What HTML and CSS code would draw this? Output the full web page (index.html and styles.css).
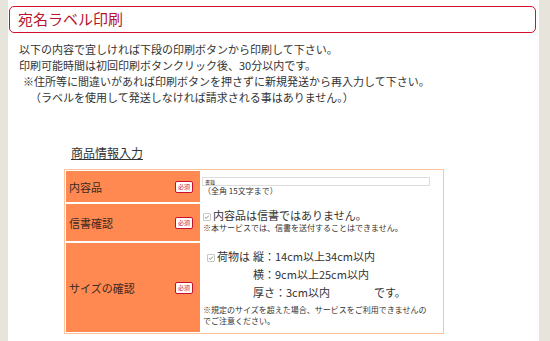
FILE: index.html
```html
<!DOCTYPE html>
<html lang="ja">
<head>
<meta charset="utf-8">
<title>宛名ラベル印刷</title>
<link rel="stylesheet" href="styles.css">
</head>
<body>
<div id="page">
	<div id="main">
		<h1 class="ttl">宛名ラベル印刷</h1>
		<div class="lead">
			<p>以下の内容で宜しければ下段の印刷ボタンから印刷して下さい。</p>
			<p>印刷可能時間は初回印刷ボタンクリック後、30分以内です。</p>
			<p class="ind1">※住所等に間違いがあれば印刷ボタンを押さずに新規発送から再入力して下さい。</p>
			<p class="ind2">（ラベルを使用して発送しなければ請求される事はありません。）</p>
		</div>
		<h2 class="sub">商品情報入力</h2>
		<div class="form">
			<div class="lbl"><span>内容品</span><span class="req">必須</span></div>
			<div class="val v1">
				<div class="inp">書籍</div>
				<div class="note">（全角 15文字まで）</div>
			</div>
			<div class="lbl"><span>信書確認</span><span class="req">必須</span></div>
			<div class="val v2">
				<div class="chkline"><span class="chk"><svg viewBox="0 0 8 8"><path d="M1.5 4.2l1.6 1.7L6.5 2" fill="none" stroke="#777" stroke-width="1.1"/></svg></span>内容品は信書ではありません。</div>
				<div class="note">※本サービスでは、信書を送付することはできません。</div>
			</div>
			<div class="lbl"><span>サイズの確認</span><span class="req">必須</span></div>
			<div class="val v3">
				<div class="size">
					<div class="sizehead"><span class="chk"><svg viewBox="0 0 8 8"><path d="M1.5 4.2l1.6 1.7L6.5 2" fill="none" stroke="#777" stroke-width="1.1"/></svg></span>荷物は</div>
					<div class="sizelist">
						<div>縦：14cm以上34cm以内</div>
						<div>横：9cm以上25cm以内</div>
						<div>厚さ：3cm以内<span class="desu">です。</span></div>
					</div>
				</div>
				<div class="note">※規定のサイズを超えた場合、サービスをご利用できませんの<br>でご注意ください。</div>
			</div>
		</div>
	</div>
</div>
</body>
</html>
```

FILE: styles.css
```css
body {
	margin: 0;
	background: #e7e4db;
	font-family: "Noto Sans CJK JP", sans-serif;
	color: #333;
}
#page {
	padding-left: 8px;
	width: 531px;
	height: 341px;
	overflow: hidden;
}
#main {
	background: #fff;
	height: 341px;
	padding-top: 6px;
	box-sizing: border-box;
}
.ttl {
	margin: 0 3px 0 1px;
	height: 27px;
	box-sizing: border-box;
	border: 1.5px solid #d4122e;
	border-radius: 5px;
	font-size: 15px;
	font-weight: normal;
	line-height: 24px;
	color: #b5142c;
	padding-left: 8px;
}
.lead {
	margin: 8px 0 0 11px;
	font-size: 11px;
	line-height: 16px;
}
.lead p {
	margin: 0;
}
.lead .ind1 {
	padding-left: 4px;
}
.lead .ind2 {
	padding-left: 11px;
}
.sub {
	margin: 40px 0 0 63px;
	font-size: 12px;
	line-height: 16px;
	font-weight: normal;
	text-decoration: underline;
}
.form {
	margin: 8px 0 0 56px;
	width: 380px;
	box-sizing: border-box;
	border: 1px solid #ffc3a0;
	padding: 1px;
	display: grid;
	grid-template-columns: 134px 1fr;
	grid-template-rows: 31px 37px 89px;
	gap: 2px;
	background: #fff;
}
.lbl {
	background: #ff8950;
	display: flex;
	align-items: center;
	justify-content: space-between;
	padding: 0 7px 0 3px;
	font-size: 11px;
	color: #3a2a22;
}
.req {
	display: inline-block;
	width: 18px;
	height: 12px;
	box-sizing: border-box;
	background: #fff;
	border: 1.5px solid #c8102e;
	border-radius: 2px;
	color: #c8102e;
	font-size: 6px;
	line-height: 9px;
	text-align: center;
}
.val {
	font-size: 11px;
}
.note {
	font-size: 8px;
	line-height: 11px;
}
.v1 {
	padding-top: 6px;
}
.inp {
	width: 228px;
	height: 9px;
	box-sizing: border-box;
	border: 1px solid #ddd;
	font-size: 5px;
	line-height: 7px;
	padding-left: 2px;
}
.v1 .note {
	padding-left: 1px;
	line-height: 10px;
}
.v2 {
	padding: 4px 0 0 1px;
}
.chkline {
	line-height: 14px;
}
.chk {
	display: inline-block;
	width: 8px;
	height: 8px;
	box-sizing: border-box;
	border: 1px solid #c8c8c8;
	border-radius: 1px;
	margin-right: 2px;
	vertical-align: -1px;
}
.chk svg {
	display: block;
	width: 6px;
	height: 6px;
}
.v3 {
	padding: 4px 0 0 1px;
}
.size {
	display: flex;
	line-height: 18px;
	padding-left: 4px;
}
.sizehead {
	width: 46px;
}
.desu {
	margin-left: 44px;
}
.v3 .note {
	margin-top: 3px;
}
```
